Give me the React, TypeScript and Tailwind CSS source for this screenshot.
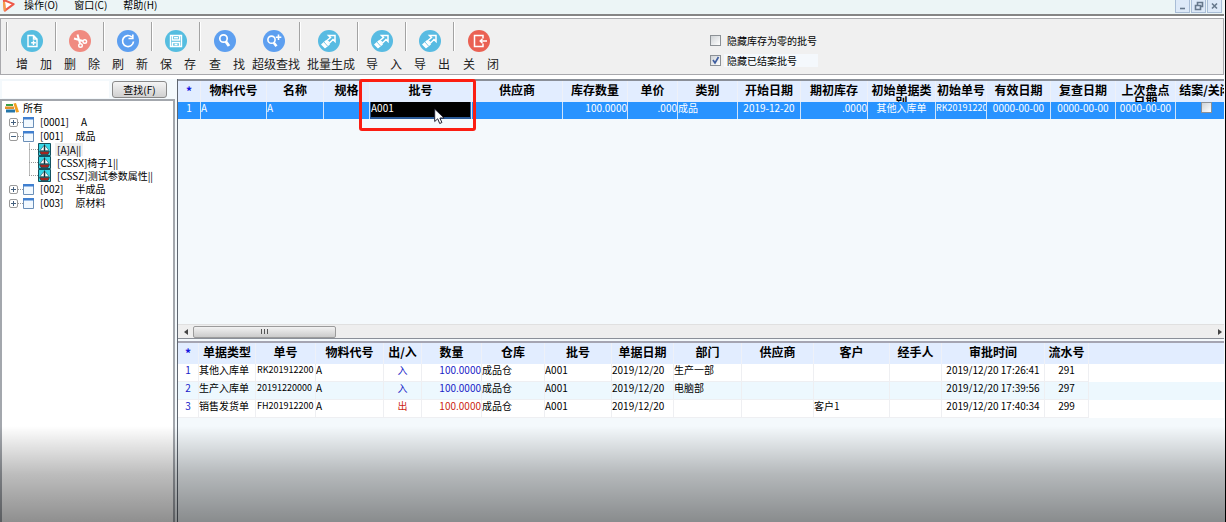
// 批号管理窗口：菜单栏 + 工具栏 + 左侧物料树 + 右侧批号表 / 出入库流水表
import type { ReactNode } from 'react';

type Align = 'left' | 'center' | 'right';

interface Column {
  title: string;
  /** 列宽（每列唯一，写全类名） */
  width: string;
  align?: Align;
  /** 长编号列用小一号字 */
  small?: boolean;
}

const ALIGN: Record<Align, string> = {
  left: 'text-left',
  center: 'text-center',
  right: 'text-right',
};

const BATCH_COLUMNS: Column[] = [
  { title: '*', width: 'w-[23px]', align: 'center' },
  { title: '物料代号', width: 'w-[66px]' },
  { title: '名称', width: 'w-[57px]' },
  { title: '规格', width: 'w-[46px]' },
  { title: '批号', width: 'w-[102px]' },
  { title: '供应商', width: 'w-[91px]' },
  { title: '库存数量', width: 'w-[65px]', align: 'right' },
  { title: '单价', width: 'w-[50px]', align: 'right' },
  { title: '类别', width: 'w-[60px]' },
  { title: '开始日期', width: 'w-[63px]', align: 'center' },
  { title: '期初库存', width: 'w-[67px]', align: 'right' },
  { title: '初始单据类别', width: 'w-[68px]', align: 'center' },
  { title: '初始单号', width: 'w-[51px]', small: true },
  { title: '有效日期', width: 'w-[64px]', align: 'center' },
  { title: '复查日期', width: 'w-[65px]', align: 'center' },
  { title: '上次盘点日期', width: 'w-[60px]', align: 'center' },
  { title: '结案/关闭', width: 'w-[60px]', align: 'center' },
];

const BATCH_ROW = [
  '1',
  'A',
  'A',
  '',
  'A001',
  '',
  '100.0000',
  '.000',
  '成品',
  '2019-12-20',
  '.0000',
  '其他入库单',
  'RK20191220',
  '0000-00-00',
  '0000-00-00',
  '0000-00-00',
];

const FLOW_COLUMNS: Column[] = [
  { title: '*', width: 'w-[21px]', align: 'center' },
  { title: '单据类型', width: 'w-[57px]' },
  { title: '单号', width: 'w-[60px]', small: true },
  { title: '物料代号', width: 'w-[68px]' },
  { title: '出/入', width: 'w-[38px]', align: 'center' },
  { title: '数量', width: 'w-[60px]', align: 'right' },
  { title: '仓库', width: 'w-[63px]' },
  { title: '批号', width: 'w-[67px]' },
  { title: '单据日期', width: 'w-[62px]' },
  { title: '部门', width: 'w-[68px]' },
  { title: '供应商', width: 'w-[72px]' },
  { title: '客户', width: 'w-[76px]' },
  { title: '经手人', width: 'w-[52px]' },
  { title: '审批时间', width: 'w-[103px]', align: 'center' },
  { title: '流水号', width: 'w-[44px]', align: 'center' },
];

const FLOW_ROWS = [
  ['1', '其他入库单', 'RK201912200', 'A', '入', '100.0000', '成品仓', 'A001', '2019/12/20', '生产一部', '', '', '', '2019/12/20 17:26:41', '291'],
  ['2', '生产入库单', '20191220000', 'A', '入', '100.0000', '成品仓', 'A001', '2019/12/20', '电脑部', '', '', '', '2019/12/20 17:39:56', '297'],
  ['3', '销售发货单', 'FH201912200', 'A', '出', '100.0000', '成品仓', 'A001', '2019/12/20', '', '', '客户1', '', '2019/12/20 17:40:34', '299'],
];

const ICONS: Record<string, ReactNode> = {
  add: (
    <>
      <path d="M12.5 5.5h-5.500v11h9v-7.500zM12.500 5.500v3.500h3.500" />
      <path d="M12.500 10.500v4.500M10.200 12.700h4.600" />
    </>
  ),
  cut: (
    <>
      <path d="M8.500 4.500l2.500 9M5 8.500l9 2.500" strokeWidth="2" />
      <circle cx="15.800" cy="11.500" r="1.800" />
      <circle cx="11.500" cy="15.500" r="1.800" />
    </>
  ),
  refresh: <path d="M14.800 7A5.500 5.500 0 1 0 16.500 11.500M15.800 4.500v4h-4.300" strokeWidth="1.700" />,
  save: <path d="M5.500 5.500h11v11h-11zM7.500 5.500v4.500h7v-4.500M7.500 16.500v-4h7v4M9 7.700h4M9.500 14.500h3" />,
  find: (
    <>
      <circle cx="9.500" cy="8.500" r="3.700" strokeWidth="1.700" />
      <path d="M11.800 11.500l3.200 4.500" strokeWidth="3" />
    </>
  ),
  findPlus: (
    <>
      <circle cx="8.500" cy="9.700" r="3.600" strokeWidth="1.600" />
      <path d="M10.800 12.700l2.700 3.600" strokeWidth="2.600" />
      <path d="M15.500 4.500v5.500M12.800 7.200h5.500" strokeWidth="1.600" />
    </>
  ),
  share: (
    <>
      <path d="M10.500 5.500h6.500v6l-2-2-3.500 3.500-2.500-2.500 3.500-3z" strokeWidth="1.500" />
      <path d="M4 14.500l4-3.500 3 3.500-4 3z" fill="currentColor" />
      <path d="M6 12l3.500 4" stroke="#58bbe2" strokeWidth=".8" />
    </>
  ),
  exit: (
    <>
      <path d="M15 8.500V5.500H6.500v11H15V13.500" strokeWidth="1.500" />
      <path d="M12 11h7M14.500 8.800L12.200 11l2.300 2.200" />
    </>
  ),
};

interface Tool {
  icon: string;
  label: string;
  color: string;
  width: string;
  /** 右侧是否有分隔线 */
  divider: boolean;
}

const TOOLS: Tool[] = [
  { icon: 'add', label: '增　加', color: 'bg-[#55bde0]', width: 'w-12', divider: true },
  { icon: 'cut', label: '删　除', color: 'bg-[#f08a80]', width: 'w-12', divider: true },
  { icon: 'refresh', label: '刷　新', color: 'bg-[#5d9ff0]', width: 'w-12', divider: true },
  { icon: 'save', label: '保　存', color: 'bg-[#55bde0]', width: 'w-12', divider: true },
  { icon: 'find', label: '查　找', color: 'bg-[#5d9ff0]', width: 'w-12', divider: false },
  { icon: 'findPlus', label: '超级查找', color: 'bg-[#5d9ff0]', width: 'w-[52px]', divider: true },
  { icon: 'share', label: '批量生成', color: 'bg-[#58bbe2]', width: 'w-[58px]', divider: true },
  { icon: 'share', label: '导　入', color: 'bg-[#58bbe2]', width: 'w-12', divider: true },
  { icon: 'share', label: '导　出', color: 'bg-[#58bbe2]', width: 'w-12', divider: true },
  { icon: 'exit', label: '关　闭', color: 'bg-[#ea6153]', width: 'w-12', divider: false },
];

function ToolButton({ tool }: { tool: Tool }) {
  return (
    <div className={`flex shrink-0 items-start ${tool.width}`}>
      <button type="button" className="flex min-w-0 flex-1 flex-col items-center pt-2">
        <span className={`h-[22px] w-[22px] rounded-full text-white ${tool.color}`}>
          <svg viewBox="0 0 22 22" className="h-full w-full" fill="none" stroke="currentColor" strokeWidth="1.4">
            {ICONS[tool.icon]}
          </svg>
        </span>
        <span className="mt-1 pl-1 text-xs whitespace-nowrap text-[#222]">{tool.label}</span>
      </button>
      {tool.divider ? <span aria-hidden className="h-[29px] w-0.5 border-r border-l border-l-[#a3a3a3] border-r-white" /> : null}
    </div>
  );
}

function MenuBar() {
  return (
    <header className="flex h-[14px] shrink-0 items-start justify-between bg-[#ecf5f6] pl-0.5">
      <nav className="flex items-start gap-4 leading-[10px]">
        <svg viewBox="0 0 14 14" className="-mr-2 h-[13px] w-[14px]" aria-hidden>
          <path d="M1.500 0l10.500 4.500L2.500 11.500z" fill="#fff" stroke="#ee5a4a" strokeWidth="2.200" strokeLinejoin="round" />
          <path d="M2.500 11.500L1.500 2" stroke="#f5a04a" strokeWidth="2.200" />
        </svg>
        <button type="button">操作(O)</button>
        <button type="button">窗口(C)</button>
        <button type="button">帮助(H)</button>
      </nav>
      <div className="flex gap-px pr-0.5 text-[#66788c]">
        {[
          { name: '最小化', d: 'M5 8.500h5' },
          { name: '还原', d: 'M4.500 5.500h5v4h-5zM6.500 5V2.500h5v4H10' },
          { name: '关闭窗口', d: 'M5 3.500l5 5M10 3.500l-5 5' },
        ].map((b) => (
          <button
            key={b.name}
            type="button"
            aria-label={b.name}
            className="h-[13px] w-[15px] border border-t-0 border-[#a9bdd6] bg-[#dde9f8]"
          >
            <svg viewBox="0 0 15 12" className="-ml-px h-3 w-[15px]" fill="none" stroke="currentColor" strokeWidth="1.600">
              <path d={b.d} />
            </svg>
          </button>
        ))}
      </div>
    </header>
  );
}

function CheckOption({ label, checked }: { label: string; checked?: boolean }) {
  return (
    <label className={`flex h-[13px] items-center gap-1.5 ${checked ? 'w-[108px] bg-[linear-gradient(90deg,transparent_14px,#f4f8fc_14px)]' : ''}`}>
      <CheckBox checked={checked} />
      <span>{label}</span>
    </label>
  );
}

function CheckBox({ checked, label }: { checked?: boolean; label?: string }) {
  return (
    <span className="relative inline-block h-[11px] w-[11px] shrink-0">
      <input
        type="checkbox"
        defaultChecked={checked}
        aria-label={label}
        className="peer block h-[11px] w-[11px] appearance-none border border-[#8c9196] bg-linear-to-br from-[#cfd3d6] to-white"
      />
      <svg viewBox="0 0 11 11" className="pointer-events-none absolute inset-0 hidden peer-checked:block" fill="none" stroke="#3f5ea0" strokeWidth="1.700">
        <path d="M3 5l2 3 3.500-6" />
      </svg>
    </span>
  );
}

function Toolbar() {
  return (
    <div className="flex h-[57px] shrink-0 border border-[#a9a9ad] bg-[#f0f0f0] pt-[3px] pl-[5px]">
      <span aria-hidden className="mr-px h-[29px] w-0.5 border-r border-l border-l-[#a3a3a3] border-r-white" />
      {TOOLS.map((tool) => (
        <ToolButton key={tool.label} tool={tool} />
      ))}
      <div className="ml-[207px] flex shrink-0 flex-col gap-[7px] pt-3">
        <CheckOption label="隐藏库存为零的批号" />
        <CheckOption label="隐藏已结案批号" checked />
      </div>
    </div>
  );
}

function WindowIcon() {
  return (
    <svg viewBox="0 0 11 11" className="h-[11px] w-[11px] shrink-0" aria-hidden>
      <path d="M.5.500h10v10H.5z" fill="#f2f9ff" stroke="#6a8fb8" />
      <path d="M0 0h11v2.500H0z" fill="#3f7fd0" />
    </svg>
  );
}

function BoatIcon() {
  return (
    <svg viewBox="0 0 13 13" className="h-[13px] w-[13px] shrink-0" aria-hidden>
      <path d="M.5.500h12v12H.5z" fill="#35d5e6" stroke="#12515e" />
      <path d="M6 2.500v5H2zM7 2.500l4 5H7z" fill="#fff" stroke="#15323a" strokeWidth=".5" />
      <path d="M6.500 1.500V8" stroke="#15323a" />
      <path d="M1.500 8.500h10l-1.500 3h-7z" fill="#a3251f" stroke="#15323a" strokeWidth=".6" />
    </svg>
  );
}

function Branch({ code, name, open, children }: { code: string; name: string; open?: boolean; children?: ReactNode }) {
  return (
    <li>
      <div className="flex h-[14px] items-center">
        <button
          type="button"
          aria-label={`${open ? '折叠' : '展开'} ${name}`}
          aria-expanded={Boolean(open)}
          className="h-[9px] w-[9px] rounded-xs border border-[#9a9a9a] bg-white"
        >
          <svg viewBox="0 0 7 7" className="h-[7px] w-[7px]" stroke="#44607e">
            <path d={open ? 'M1 3.500h5' : 'M1 3.500h5M3.500 1v5'} />
          </svg>
        </button>
        <span aria-hidden className="w-[5px] border-t border-dotted border-[#999]" />
        <WindowIcon />
        <span className="ml-1.5">{code}</span>
        <span className="ml-3">{name}</span>
      </div>
      {children}
    </li>
  );
}

function Leaf({ label, active }: { label: string; active?: boolean }) {
  return (
    <li className="flex h-[13px] items-center">
      <span aria-hidden className="w-[9px] border-t border-dotted border-[#999]" />
      <BoatIcon />
      <button type="button" className={`ml-1 px-0.5 leading-[13px] whitespace-nowrap ${active ? 'bg-[#f0f0f0]' : ''}`}>
        {label}
      </button>
    </li>
  );
}

function MaterialTree() {
  return (
    <aside className="flex w-[175px] shrink-0 flex-col">
      <form className="flex h-5 shrink-0 items-center gap-[3px] pl-0.5" onSubmit={(e) => e.preventDefault()}>
        <input type="text" aria-label="查找物料" className="h-[17px] w-[107px] bg-white px-1 outline-none" />
        <button
          type="submit"
          className="h-[17px] w-[55px] rounded-[3px] border border-[#8a8a8a] bg-linear-to-b from-[#f5f5f5] to-[#d0d0d0] leading-[15px]"
        >
          查找(F)
        </button>
      </form>
      <div className="flex-1 border-2 border-[#a3a7ad] border-b-0 bg-white pl-[3px]">
        <div className="flex h-[14px] items-center gap-1">
          <svg viewBox="0 0 14 12" className="h-3 w-[14px]" aria-hidden>
            <path d="M1 2h7v2H1z" fill="#3aa04a" />
            <path d="M0 4.500h9v2.500H0z" fill="#e0912c" />
            <path d="M1 7.500h9v3H1z" fill="#2475a8" />
            <path d="M8.500 1.500l2.500-.5 3 9-3 .5z" fill="#f0a020" />
          </svg>
          <span>所有</span>
        </div>
        <ul className="ml-1">
          <Branch code="[0001]" name="A" />
          <Branch code="[001]" name="成品" open>
            <ul className="ml-5 bg-[linear-gradient(#bbb,#bbb)] bg-[length:1px_33px] bg-no-repeat">
              <Leaf label="[A]A||" active />
              <Leaf label="[CSSX]椅子1||" />
              <Leaf label="[CSSZ]测试参数属性||" />
            </ul>
          </Branch>
          <Branch code="[002]" name="半成品" />
          <Branch code="[003]" name="原材料" />
        </ul>
      </div>
    </aside>
  );
}

function HeadRow({ columns }: { columns: Column[] }) {
  return (
    <thead>
      <tr className="bg-[#e2edff]">
        {columns.map((c) => (
          <th key={c.title} scope="col" className={`border-r border-[#eef1f8] p-0 ${c.width}`}>
            <div
              className={`h-[21px] overflow-hidden text-xs leading-3 font-bold ${c.title === '*' ? 'pt-1 text-[#1414e0]' : 'pt-[3px]'} ${
                c.title === '结案/关闭' ? 'whitespace-nowrap' : ''
              }`}
            >
              {c.title}
            </div>
          </th>
        ))}
      </tr>
    </thead>
  );
}

function BatchTable() {
  return (
    <table className="w-[1058px] table-fixed border-separate border-spacing-0">
      <HeadRow columns={BATCH_COLUMNS} />
      <tbody>
        <tr className="bg-[#2893ff] text-white">
          {BATCH_ROW.map((v, i) => (
            <td key={BATCH_COLUMNS[i].title} className="border-r border-[#cfe3fa] p-0">
              <div
                className={`h-[17px] overflow-x-clip leading-[11px] whitespace-nowrap ${ALIGN[BATCH_COLUMNS[i].align ?? 'left']} ${
                  BATCH_COLUMNS[i].small ? 'text-[9px]' : ''
                } ${i === 4 ? 'border border-t-0 border-b-2 border-[#2a5a98] bg-black' : ''}`}
              >
                {v}
              </div>
            </td>
          ))}
          <td className="p-0">
            <div className="flex h-[17px] justify-center">
              <CheckBox label="结案/关闭" />
            </div>
          </td>
        </tr>
      </tbody>
    </table>
  );
}

function flowColor(row: string[], i: number): string {
  if (i === 0) return 'text-[#1a24c8]';
  if (i === 4 || i === 5) return row[4] === '入' ? 'text-[#1a24c8]' : 'text-[#cc1f14]';
  return '';
}

function FlowTable() {
  return (
    <table className="w-[911px] table-fixed border-separate border-spacing-0">
      <HeadRow columns={FLOW_COLUMNS} />
      <tbody>
        {FLOW_ROWS.map((row, r) => (
          <tr key={row[0]} className={r % 2 === 1 ? 'bg-[#edf8fe]' : 'bg-white'}>
            {row.map((v, i) => (
              <td key={FLOW_COLUMNS[i].title} className="border-r border-b border-[#eeeff2] p-0">
                <div
                  className={`h-[17px] overflow-x-clip leading-[11px] whitespace-nowrap ${ALIGN[FLOW_COLUMNS[i].align ?? 'left']} ${
                    FLOW_COLUMNS[i].small ? 'pl-px text-[9px]' : ''
                  } ${flowColor(row, i)}`}
                >
                  {v}
                </div>
              </td>
            ))}
          </tr>
        ))}
      </tbody>
    </table>
  );
}

function ScrollBar() {
  return (
    <div className="flex h-[14px] shrink-0 items-center justify-between border-t border-[#e0e0e0] bg-[#eeeeee]">
      <div className="flex items-center">
        <button type="button" aria-label="向左滚动" className="flex w-[15px] justify-center">
          <svg viewBox="0 0 4 6" className="h-1.5 w-1">
            <path d="M4 0v6L0 3z" fill="#444" />
          </svg>
        </button>
        <div className="flex h-3 w-[143px] items-center justify-center gap-0.5 rounded-xs border border-[#9b9b9b] bg-linear-to-b from-[#f2f2f2] to-[#cbcbcb]">
          <span className="h-[5px] w-px bg-[#555]" />
          <span className="h-[5px] w-px bg-[#555]" />
          <span className="h-[5px] w-px bg-[#555]" />
        </div>
      </div>
      <button type="button" aria-label="向右滚动" className="flex w-2 justify-center">
        <svg viewBox="0 0 4 6" className="h-1.5 w-1">
          <path d="M0 0v6l4-3z" fill="#444" />
        </svg>
      </button>
    </div>
  );
}

export default function App() {
  return (
    <div className="relative flex h-screen flex-col overflow-hidden border-r border-black bg-[#f4f9fc] pr-px font-['Noto_Sans_CJK_SC',sans-serif] text-[10px] leading-3 text-black">
      <MenuBar />
      <div aria-hidden className="h-1 shrink-0 border-t-2 border-[#858585] bg-white" />
      <Toolbar />
      <div aria-hidden className="h-1 shrink-0 bg-white" />

      <main className="flex min-h-0 flex-1 gap-0.5">
        <MaterialTree />
        <div className="flex min-w-0 flex-1 flex-col border-l border-[#5f6670]">
          <section aria-label="批号" className="flex h-[260px] shrink-0 flex-col overflow-hidden border-t-2 border-b border-[#8a8f98]">
            <div className="min-h-0 flex-1 overflow-hidden">
              <BatchTable />
            </div>
            <ScrollBar />
          </section>
          <section aria-label="出入库流水" className="mt-0.5 min-h-0 flex-1 overflow-hidden border-t-2 border-[#a5a5b2]">
            <div className="bg-[linear-gradient(#e2edff_21px,#fff_21px,#fff_39px,#edf8fe_39px,#edf8fe_57px,#fff_57px)]">
              <FlowTable />
            </div>
          </section>
        </div>
      </main>

      {/* 标注框与鼠标指针，浮在批号列之上 */}
      <div aria-hidden className="pointer-events-none absolute top-[79px] left-[359px] h-[52px] w-[117px] rounded-[3px] border-[3px] border-[#fb1e12]">
        <svg viewBox="0 0 11 17" className="absolute top-[26px] left-[72px] h-[17px] w-[11px]">
          <path d="M.7 1v12.500l3-2.700 2 4.700 2.200-1-2-4.500h4.200z" fill="#fff" stroke="#223" />
        </svg>
      </div>

      <div aria-hidden className="pointer-events-none absolute inset-x-0 bottom-0 h-24 bg-linear-to-b from-black/0 via-black/26 to-black/44" />
    </div>
  );
}
